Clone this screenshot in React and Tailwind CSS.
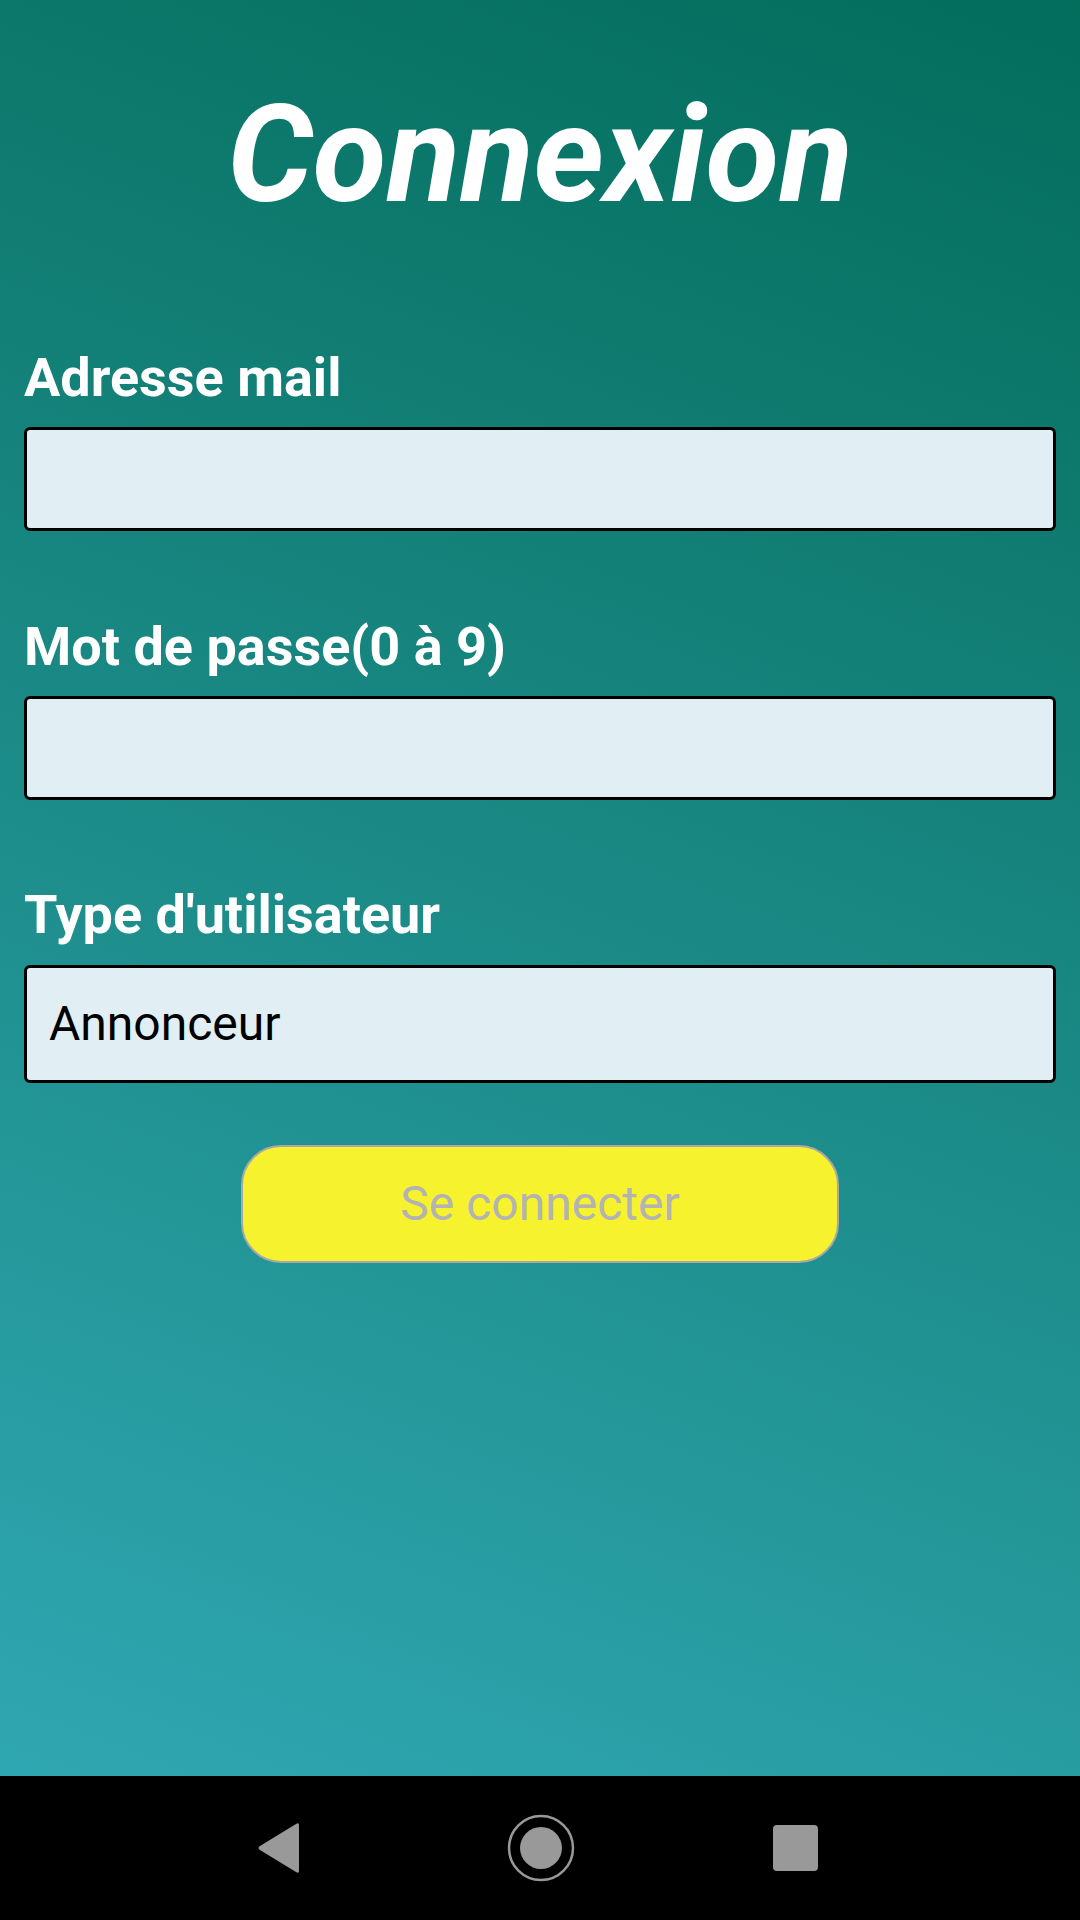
import React from 'react';

const Field = ({ label, children, className }) => (
  <div className={className}>
    <label className="block text-[54px] leading-none font-bold text-white">{label}</label>
    {children}
  </div>
);

const NavBar = () => (
  <div className="h-[144px] bg-black flex items-center justify-center pr-[8px]">
    <svg width="48" height="52" viewBox="0 0 48 52" className="mr-[204px]">
      <path d="M44 3 L44 49 Q44 52 41 50 L5 28 Q2 26 5 24 L41 2 Q44 0 44 3 Z" fill="#999999" />
    </svg>
    <svg width="68" height="68" viewBox="0 0 68 68" className="mr-[198px]">
      <circle cx="34" cy="34" r="32" fill="none" stroke="#999999" strokeWidth="2.5" />
      <circle cx="34" cy="34" r="21" fill="#999999" />
    </svg>
    <div className="w-[45px] h-[46px] rounded-[4px] bg-[#999999]" />
  </div>
);

export default function App() {
  return (
    <div className="w-[1080px] h-[1920px] flex flex-col font-['Roboto',sans-serif]">
      <div className="flex-1 bg-linear-21 from-[#2fa7b2] to-[#026d5b] px-[24px]">
        <h1 className="pt-[88px] text-center text-[135px] leading-none font-bold italic text-white">
          Connexion
        </h1>

        <Field label="Adresse mail" className="mt-[128px]">
          <input
            type="email"
            className="mt-[22px] block w-full h-[104px] bg-[#e1eff5] border-[3px] border-black rounded-[6px] px-[22px] text-[48px] outline-none"
          />
        </Field>

        <Field label="Mot de passe(0 à 9)" className="mt-[89px]">
          <input
            type="password"
            className="mt-[22px] block w-full h-[104px] bg-[#e1eff5] border-[3px] border-black rounded-[6px] px-[22px] text-[48px] outline-none"
          />
        </Field>

        <Field label="Type d'utilisateur" className="mt-[88px]">
          <select
            defaultValue="Annonceur"
            className="mt-[23px] block w-full h-[118px] appearance-none bg-[#e1eff5] border-[3px] border-black rounded-[6px] px-[22px] text-[48px] text-black outline-none"
          >
            <option>Annonceur</option>
            <option>Utilisateur</option>
          </select>
        </Field>

        <div className="mt-[62px] flex justify-center">
          <button
            disabled
            className="w-[598px] h-[118px] bg-[#f6f22e] border-2 border-[#a8a8a8] rounded-[40px] text-[48px] text-[#b3b3b3]"
          >
            Se connecter
          </button>
        </div>
      </div>
      <NavBar />
    </div>
  );
}
